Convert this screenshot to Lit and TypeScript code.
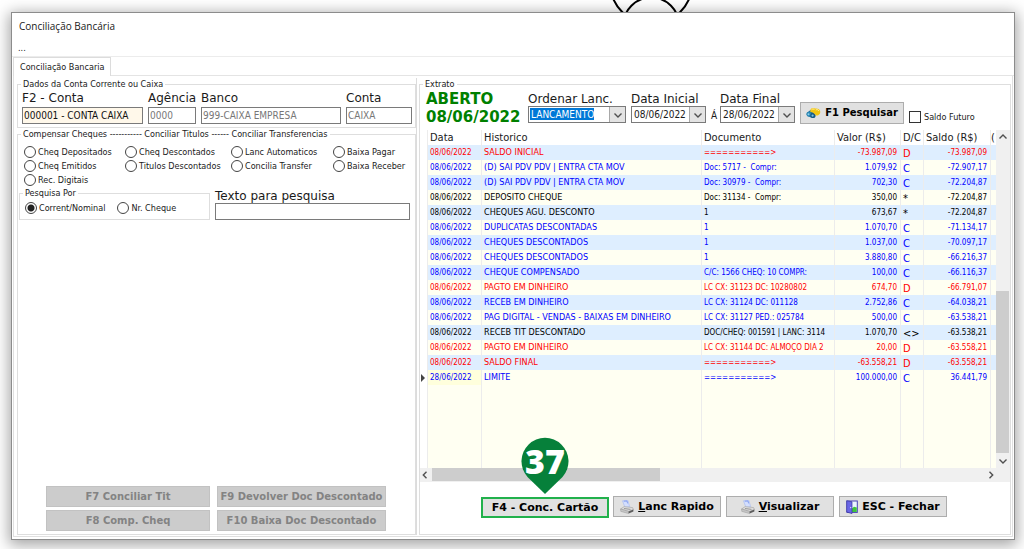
import { LitElement, html, css, svg } from "lit";
import { customElement } from "lit/decorators.js";

type Row = [string, string, string, string, string, string, string];

const EQ = "===========>";
const ROWS: Row[] = [
  ["red", "08/06/2022", "SALDO INICIAL", EQ, "-73.987,09", "D", "-73.987,09"],
  ["blue", "08/06/2022", "(D) SAI PDV PDV | ENTRA CTA MOV", "Doc: 5717 -  Compr:", "1.079,92", "C", "-72.907,17"],
  ["blue", "08/06/2022", "(D) SAI PDV PDV | ENTRA CTA MOV", "Doc: 30979 -  Compr:", "702,30", "C", "-72.204,87"],
  ["black", "08/06/2022", "DEPOSITO CHEQUE", "Doc: 31134 -  Compr:", "350,00", "*", "-72.204,87"],
  ["black", "08/06/2022", "CHEQUES AGU. DESCONTO", "1", "673,67", "*", "-72.204,87"],
  ["blue", "08/06/2022", "DUPLICATAS DESCONTADAS", "1", "1.070,70", "C", "-71.134,17"],
  ["blue", "08/06/2022", "CHEQUES DESCONTADOS", "1", "1.037,00", "C", "-70.097,17"],
  ["blue", "08/06/2022", "CHEQUES DESCONTADOS", "1", "3.880,80", "C", "-66.216,37"],
  ["blue", "08/06/2022", "CHEQUE COMPENSADO", "C/C: 1566 CHEQ: 10 COMPR:", "100,00", "C", "-66.116,37"],
  ["red", "08/06/2022", "PAGTO EM DINHEIRO", "LC CX: 31123 DC: 10280802", "674,70", "D", "-66.791,07"],
  ["blue", "08/06/2022", "RECEB EM DINHEIRO", "LC CX: 31124 DC: 011128", "2.752,86", "C", "-64.038,21"],
  ["blue", "08/06/2022", "PAG DIGITAL - VENDAS - BAIXAS EM DINHEIRO", "LC CX: 31127 PED.: 025784", "500,00", "C", "-63.538,21"],
  ["black", "08/06/2022", "RECEB TIT DESCONTADO", "DOC/CHEQ: 001591 | LANC: 3114", "1.070,70", "<>", "-63.538,21"],
  ["red", "08/06/2022", "PAGTO EM DINHEIRO", "LC CX: 31144 DC: ALMOÇO DIA 2", "20,00", "D", "-63.558,21"],
  ["red", "08/06/2022", "SALDO FINAL", EQ, "-63.558,21", "D", "-63.558,21"],
  ["blue", "28/06/2022", "LIMITE", EQ, "100.000,00", "C", "36.441,79"],
];

const MODES = [
  "Cheq Depositados", "Cheq Descontados", "Lanc Automaticos", "Baixa Pagar",
  "Cheq Emitidos", "Titulos Descontados", "Concilia Transfer", "Baixa Receber",
  "Rec. Digitais",
];

const chevron = (d: string) => svg`<path d=${d} fill="none" stroke="#505050" stroke-width="1.4"/>`;
const DOWN = "M1.5 3.5 5 7 8.5 3.5";
const UP = "M1.5 6.5 5 3 8.5 6.5";
const LEFT = "M6.5 1.8 3.3 5 6.5 8.2";
const RIGHT = "M3.5 1.8 6.7 5 3.5 8.2";
const arrow = (d: string) => html`<svg width="10" height="10" viewBox="0 0 10 10" aria-hidden="true">${chevron(d)}</svg>`;

const printer = html`<svg width="14" height="14" viewBox="0 0 14 14" aria-hidden="true">
  <path d="M2.500.8 7.800.4 9.600 6.500 5 7.500Z" fill="#d3defd" stroke="#a5b8f4" stroke-width=".6"/>
  <path d="M3.800 1.200 7 1 7.600 3.400" fill="none" stroke="#7492ee" stroke-width=".8"/>
  <path d="M.6 9 4.200 6.600 12.600 7.600 13.400 9.500 8.600 11.400Z" fill="#dedede" stroke="#a0a0a0" stroke-width=".6"/>
  <path d="M.6 9 8.600 11.400V13.500L.8 11.400Z" fill="#c6c6c6" stroke="#999" stroke-width=".5"/>
  <path d="M8.600 11.400 13.400 9.500V11.500L8.600 13.500Z" fill="#5c5c5c"/>
  <path d="M4 8.500 10.500 9.400" stroke="#858585" stroke-width=".8"/>
</svg>`;

const door = html`<svg width="12" height="14" viewBox="0 0 12 14" aria-hidden="true">
  <rect x="1" y="1" width="10.3" height="11.4" fill="#eaf6ff" stroke="#4641b4"/>
  <path d="M6 8.5 8 6.8 10.8 7.4V12H6Z" fill="#3fc43c"/>
  <path d="M.7.8 6 1.8V13.6L.7 12Z" fill="#6a66e6" stroke="#3a359f" stroke-width=".7"/>
  <circle cx="4.7" cy="7.6" r=".7" fill="#e8e8ff"/>
</svg>`;

const binoculars = html`<svg width="15" height="12" viewBox="0 0 15 12" aria-hidden="true">
  <path d="M.6 6 4.600 3 9 4.500 8.600 9.400 5 10.600 1 9Z" fill="#1e6f9c"/>
  <circle cx="2.900" cy="7.200" r="2.400" fill="#2b88b5"/><circle cx="7" cy="8.400" r="2.600" fill="#175a86"/>
  <circle cx="2.500" cy="7.200" r="1" fill="#8fd0ea"/><circle cx="6.600" cy="8.600" r="1.100" fill="#7fc4e4"/>
  <path d="M4.300 3.400C4.600.9 7.600.5 9 1.600c1.600-.5 4.600-.1 5.200 2.600.5 2.600-1.600 4.700-4.200 4.300C8.600 6.500 6.500 5.200 4.300 5Z" fill="#f2c511"/>
  <path d="M5.600 2.700C6.500 1.700 8 1.800 8.400 2.700M9.800 3C11 2.200 12.600 2.800 12.700 4" fill="none" stroke="#fff3a0" stroke-width="1"/>
</svg>`;

@customElement("app-root")
export class AppRoot extends LitElement {
  static styles = css`
    :host {
      display: flex;
      box-sizing: border-box;
      min-height: 100vh;
      padding: 12px 9px 9px 11px;
      position: relative;
      overflow: hidden;
      background: #fff;
      color: #1a1a1a;
      font: 9px/12px "DejaVu Sans Condensed", "DejaVu Sans", sans-serif;
    }
    *, *::before { box-sizing: border-box; }
    button, input, select { font: inherit; color: inherit; margin: 0; border-radius: 0; }
    svg { display: block; flex: none; }
    .figure { position: absolute; top: 0; left: 606px; }
    .window {
      position: relative;
      flex: 1;
      min-width: 0;
      display: flex;
      flex-direction: column;
      background: #fff;
      border: 1px solid #8c8c8c;
      box-shadow: 0 3px 14px 2px rgba(0, 0, 0, .36);
    }
    .title {
      margin: 0;
      padding: 5px 7px 0;
      font: 400 10px/16px "Open Sans", "Noto Sans", sans-serif;
    }
    .menu { padding: 8px 6px 1px; line-height: 13px; border-bottom: 1px solid #ececec; }
    .tabs { display: flex; height: 19px; padding-left: 1px; }
    .tab {
      padding: 3px 6px;
      border: 1px solid #dcdcdc;
      border-bottom: 0;
      background: #fff;
      line-height: 12px;
    }
    .tabs-rest { flex: 1; border-bottom: 1px solid #e4e4e4; }
    .pane {
      flex: 1;
      min-height: 0;
      display: grid;
      grid-template-columns: 400px minmax(0, 1fr);
      gap: 2px;
      margin: 0 1px 2px;
      padding: 2px 1px 1px 3px;
      border: 1px solid #e0e0e0;
      border-top: 0;
    }
    .left { display: flex; flex-direction: column; border-right: 1px solid #dcdcdc; }
    fieldset { margin: 0; padding: 0; border: 1px solid #dedede; min-width: 0; }
    legend { margin-left: 3px; padding: 0 2px; line-height: 12px; white-space: pre; }
    .caption { font: 12px/14px "DejaVu Sans", sans-serif; white-space: nowrap; }
    .field { display: flex; flex-direction: column; min-width: 0; }
    .text {
      width: 100%;
      height: 17px;
      padding: 0 1px;
      border: 1px solid #7a7a7a;
      background: #fff;
      font-size: 10px;
      outline: none;
    }
    .text:disabled { color: #777; }
    .account {
      display: grid;
      grid-template-columns: 121px 48px 140px 66px;
      gap: 5px;
      padding: 1px 4px 3px;
    }
    .account .field { gap: 2px; }
    .account .text.active { background: #fff8ea; color: #111; }
    .compensate { flex: 1; display: flex; flex-direction: column; }
    .body { height: 100%; display: flex; flex-direction: column; }
    .modes { display: grid; grid-template-columns: 101px 106px 102px 1fr; padding: 5px 0 0 6px; }
    .option { display: flex; align-items: center; gap: 2px; height: 14px; white-space: nowrap; }
    input[type="radio"] {
      appearance: none;
      flex: none;
      width: 12px;
      height: 12px;
      border: 1px solid #444;
      border-radius: 50%;
      background: #fff;
    }
    input[type="radio"]:checked { background: radial-gradient(circle, #222 0 3px, #fff 4px); }
    .search { display: grid; grid-template-columns: 191px 195px; gap: 5px; padding-left: 1px; }
    .search .field { justify-content: flex-end; }
    .kinds { display: flex; gap: 12px; height: 20px; padding: 2px 5px 0; }
    .actions {
      margin-top: auto;
      display: grid;
      grid-template-columns: 164px 169px;
      gap: 3px 7px;
      padding: 0 0 3px 28px;
    }
    .btn {
      display: inline-flex;
      align-items: center;
      justify-content: center;
      gap: 4px;
      height: 21px;
      padding: 0;
      border: 1px solid #adadad;
      background: #e1e1e1;
      color: #000;
      font: bold 11px/14px "DejaVu Sans", sans-serif;
      white-space: nowrap;
    }
    .btn:disabled { background: #ccc; border-color: #c2c2c2; color: #838383; font-size: 10px; }
    .filters { display: flex; gap: 5px; height: 40px; padding-left: 6px; font-size: 10px; }
    .status { width: 97px; color: #008000; font: bold 15px/18px "DejaVu Sans", sans-serif; }
    .status span { display: block; }
    .filters .field { padding-top: 2px; }
    .wide { width: 98px; }
    .date { width: 75px; }
    .until { align-self: flex-end; width: 4px; padding-bottom: 8px; }
    .combo { display: grid; grid-template-columns: 1fr 16px; height: 17px; border: 1px solid #7a7a7a; background: #fff; }
    .combo input { width: 100%; min-width: 0; padding: 0 2px; border: 0; outline: none; background: none; }
    .combo select {
      grid-area: 1 / 1 / 2 / 3;
      appearance: none;
      padding: 0 2px;
      border: 0;
      color: #fff;
      background: linear-gradient(#0078d7, #0078d7) 1px 1px / 64px 12px no-repeat;
      outline: none;
    }
    .drop {
      grid-area: 1 / 2 / 2 / 3;
      display: grid;
      place-items: center;
      padding: 0;
      border: 0;
      border-left: 1px solid #a8a8a8;
      background: #e3e3e3;
      pointer-events: none;
    }
    .find { align-self: flex-end; width: 104px; height: 22px; margin-bottom: 6px; font-size: 10px; }
    .future { display: flex; align-items: center; gap: 3px; align-self: flex-end; height: 12px; margin-bottom: 7px; font-size: 9px; white-space: nowrap; }
    .future input { appearance: none; width: 12px; height: 12px; border: 1px solid #333; background: #fff; }
    .grid {
      flex: 1;
      min-height: 0;
      display: grid;
      grid-template-columns: minmax(0, 1fr) 14px;
      grid-template-rows: minmax(0, 1fr) 14px;
      background: #f0f0f0;
    }
    .sheet { background: #fffff2; overflow: hidden; }
    table { width: 100%; height: 100%; table-layout: fixed; border-collapse: separate; border-spacing: 0; }
    .c-mark { width: 7px; } .c-date { width: 54px; } .c-doc { width: 133px; }
    .c-value { width: 66px; } .c-dc { width: 23px; } .c-saldo { width: 67px; } .c-more { width: 6px; }
    th, td { padding: 0 2px; text-align: left; font-weight: 400; white-space: pre; overflow: hidden; border-left: 1px solid #ececec; }
    th { height: 15px; background: #fff; font-size: 11px; line-height: 15px; }
    td { height: 15px; font-size: 8px; line-height: 15px; }
    th:last-child { padding: 0; }
    th:first-child, td:first-child { padding: 0; border-left: 0; background: #fff; }
    tbody tr:nth-child(odd) { background: #deeeff; }
    tbody tr:last-child { background: none; }
    .history { font-size: 9px; }
    .current .day { background: #ffffdc; }
    .num { padding-right: 3px; text-align: right; }
    td.dc { padding-top: 2px; font-size: 11px; line-height: 13px; }
    .filler td { height: auto; }
    .red { color: #f00; } .blue { color: #00f; } .black { color: #000; }
    .vbar { display: flex; flex-direction: column; align-items: center; justify-content: space-between; padding: 2px 0; }
    .vtrack { flex: 1; align-self: stretch; display: flex; align-items: flex-end; padding-bottom: 3px; }
    .vthumb { width: 13px; height: 52%; background: #cdcdcd; }
    .hbar { display: flex; align-items: center; }
    .htrack { flex: 1; align-self: stretch; }
    .hthumb { width: 41%; height: 13px; margin-left: 2px; background: #cdcdcd; }
    .footer { display: flex; gap: 5px; height: 52px; padding: 14px 0 0 61px; }
    .footer .btn { width: 108px; }
    .footer .target { position: relative; width: 128px; margin: 1px -1px 0 0; border: 2px solid #22b14c; }
    .pin { position: absolute; left: 37px; bottom: 21px; }
    .pin text { font: 800 34px "Open Sans", sans-serif; fill: #fff; }
  `;

  private combo(id: string, value: string) {
    return html`<div class="combo">
      <input id=${id} .value=${value} />
      <button class="drop" aria-label="Abrir">${arrow(DOWN)}</button>
    </div>`;
  }

  private account() {
    return html`<fieldset>
      <legend>Dados da Conta Corrente ou Caixa</legend>
      <div class="account">
        <div class="field"><label class="caption" for="acc">F2 - Conta</label><input id="acc" class="text active" value="000001 - CONTA CAIXA" /></div>
        <div class="field"><label class="caption" for="age">Agência</label><input id="age" class="text" value="0000" disabled /></div>
        <div class="field"><label class="caption" for="bank">Banco</label><input id="bank" class="text" value="999-CAIXA EMPRESA" disabled /></div>
        <div class="field"><label class="caption" for="box">Conta</label><input id="box" class="text" value="CAIXA" disabled /></div>
      </div>
    </fieldset>`;
  }

  private compensate() {
    return html`<fieldset class="compensate">
      <legend>Compensar Cheques ----------- Conciliar Titulos ------ Conciliar Transferencias</legend>
      <div class="body">
        <div class="modes">
          ${MODES.map((m) => html`<label class="option"><input type="radio" name="mode" />${m}</label>`)}
        </div>
        <div class="search">
          <fieldset>
            <legend>Pesquisa Por</legend>
            <div class="kinds">
              <label class="option"><input type="radio" name="kind" checked />Corrent/Nominal</label>
              <label class="option"><input type="radio" name="kind" />Nr. Cheque</label>
            </div>
          </fieldset>
          <div class="field"><label class="caption" for="q">Texto para pesquisa</label><input id="q" class="text" /></div>
        </div>
        <div class="actions">
          <button class="btn" disabled>F7 Conciliar Tit</button>
          <button class="btn" disabled>F9 Devolver Doc Descontado</button>
          <button class="btn" disabled>F8 Comp. Cheq</button>
          <button class="btn" disabled>F10 Baixa Doc Descontado</button>
        </div>
      </div>
    </fieldset>`;
  }

  private sheet() {
    return html`<table>
      <colgroup>
        <col class="c-mark" /><col class="c-date" /><col /><col class="c-doc" />
        <col class="c-value" /><col class="c-dc" /><col class="c-saldo" /><col class="c-more" />
      </colgroup>
      <thead>
        <tr><th></th><th>Data</th><th>Historico</th><th>Documento</th><th>Valor (R$)</th><th>D/C</th><th>Saldo (R$)</th><th>(</th></tr>
      </thead>
      <tbody>
        ${ROWS.map(([tone, day, text, doc, value, dc, saldo], i) => {
          const current = i === ROWS.length - 1;
          return html`<tr class="${tone} ${current ? "current" : ""}">
            <td>${current ? html`<svg width="6" height="8" viewBox="0 0 6 8"><path d="M1 0 5 4 1 8Z" fill="#444"/></svg>` : ""}</td>
            <td class="day">${day}</td><td class="history">${text}</td><td>${doc}</td><td class="num">${value}</td>
            <td class="dc">${dc}</td><td class="num">${saldo}</td><td></td>
          </tr>`;
        })}
        <tr class="filler"><td></td><td></td><td></td><td></td><td></td><td></td><td></td><td></td></tr>
      </tbody>
    </table>`;
  }

  private extract() {
    return html`<fieldset class="extract">
      <legend>Extrato</legend>
      <div class="body">
        <div class="filters">
          <div class="status"><span>ABERTO</span><span>08/06/2022</span></div>
          <div class="field wide">
            <label class="caption" for="order">Ordenar Lanc.</label>
            <div class="combo">
              <select id="order"><option>LANCAMENTO</option></select>
              <span class="drop">${arrow(DOWN)}</span>
            </div>
          </div>
          <div class="field date"><label class="caption" for="from">Data Inicial</label>${this.combo("from", "08/06/2022")}</div>
          <span class="until">Á</span>
          <div class="field date"><label class="caption" for="to">Data Final</label>${this.combo("to", "28/06/2022")}</div>
          <button class="btn find">${binoculars}<span>F1 Pesquisar</span></button>
          <label class="future"><input type="checkbox" />Saldo Futuro</label>
        </div>
        <div class="grid">
          <div class="sheet">${this.sheet()}</div>
          <div class="vbar">${arrow(UP)}<div class="vtrack"><div class="vthumb"></div></div>${arrow(DOWN)}</div>
          <div class="hbar">${arrow(LEFT)}<div class="htrack"><div class="hthumb"></div></div>${arrow(RIGHT)}</div>
        </div>
        <div class="footer">
          <button class="btn target">
            F4 - Conc. Cartão
            <svg class="pin" width="50" height="58" viewBox="0 0 50 58">
              <path d="M25 57 7.5 40A23.5 23.5 0 1 1 42.5 40Z" fill="#06803a"/>
              <text x="25" y="37" text-anchor="middle">37</text>
            </svg>
          </button>
          <button class="btn">${printer}<span><u>L</u>anc Rapido</span></button>
          <button class="btn">${printer}<span><u>V</u>isualizar</span></button>
          <button class="btn">${door}<span>ESC - Fechar</span></button>
        </div>
      </div>
    </fieldset>`;
  }

  render() {
    return html`
      <svg class="figure" width="90" height="14" viewBox="0 0 90 14" aria-hidden="true">
        <g fill="none" stroke="#000" stroke-width="2"><circle cx="45.2" cy="-17" r="41"/><circle cx="45.2" cy="25.500" r="28"/></g>
      </svg>
      <main class="window">
        <h1 class="title">Conciliação Bancária</h1>
        <div class="menu">...</div>
        <div class="tabs"><button class="tab">Conciliação Bancaria</button><div class="tabs-rest"></div></div>
        <div class="pane">
          <div class="left">${this.account()}${this.compensate()}</div>
          ${this.extract()}
        </div>
      </main>`;
  }
}
